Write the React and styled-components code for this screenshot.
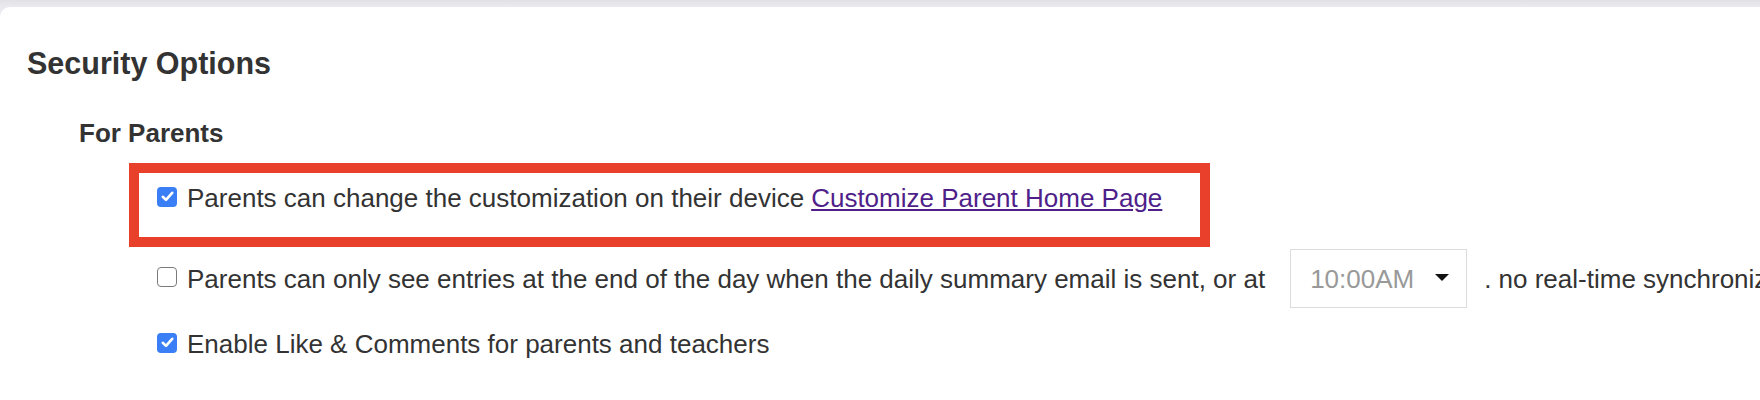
import React from 'react';
import styled, { createGlobalStyle } from 'styled-components';

const GlobalStyle = createGlobalStyle`
    html, body {
        margin: 0;
        padding: 0;
        background: #e6e6ea;
        font-family: "Liberation Sans", Arial, Helvetica, sans-serif;
        color: #333;
        overflow: hidden;
    }
`

const Page = styled.div`
    padding-top: 7px;
    background: linear-gradient(#e1e1e6, #ebebef 7px);
`

const Card = styled.section`
    background: #fff;
    border-top-left-radius: 10px;
    height: 393px;
    padding: 39px 0 0 27px;
    box-sizing: border-box;
    overflow: hidden;
`

const Title = styled.h2`
    margin: 0;
    font-size: 30.5px;
    line-height: 34px;
    font-weight: bold;
    color: #333;
`

const Section = styled.div`
    margin: 38px 0 0 52px;
`

const SubTitle = styled.h3`
    margin: 0;
    font-size: 26px;
    line-height: 30px;
    font-weight: bold;
    color: #333;
`

const Options = styled.div`
    margin: 15px 0 0 78px;
`

/* red annotation frame around the first option */
const Highlight = styled.div`
    width: fit-content;
    margin-left: -28px;
    padding: 10px 38px 24px 18px;
    border: 10px solid #e8402a;
`

const Row = styled.label`
    display: flex;
    align-items: center;
    white-space: nowrap;
    font-size: 26px;
    line-height: 30px;
    color: #333;
    margin-top: ${p => p.$top || 0}px;
`

const Box = styled.span`
    flex: none;
    width: 20px;
    height: 20px;
    margin: 0 10px 3px 0;
    box-sizing: border-box;
    border-radius: 4px;
    display: flex;
    align-items: center;
    justify-content: center;
    background: ${p => (p.$checked ? '#3a7ff6' : '#fff')};
    border: ${p => (p.$checked ? 'none' : '1.5px solid #7a7a7a')};
`

const Link = styled.a`
    color: #4f1f8a;
    text-decoration: underline;
    text-underline-offset: 2px;
    margin-left: 7px;
    cursor: pointer;
`

const Select = styled.div`
    flex: none;
    display: flex;
    align-items: center;
    justify-content: space-between;
    width: 177px;
    height: 59px;
    box-sizing: border-box;
    margin: 0 17px 0 25px;
    padding: 0 17px 0 19px;
    border: 1px solid #dcdcdc;
    color: #999;
    font-size: 26px;
`

const Caret = styled.span`
    width: 0;
    height: 0;
    border-left: 7px solid transparent;
    border-right: 7px solid transparent;
    border-top: 7px solid #111;
    margin-bottom: 2px;
`

function Check({ checked }) {
    return (
        <Box $checked={checked}>
            {checked && (
                <svg width="13" height="11" viewBox="0 0 13 11">
                    <path d="M1.8 5.8 L5 8.9 L11.2 1.8" fill="none" stroke="#fff" strokeWidth="2.6" strokeLinecap="round" strokeLinejoin="round" />
                </svg>
            )}
        </Box>
    )
}

export default function App() {
    return (
        <Page>
            <GlobalStyle />
            <Card>
                <Title>Security Options</Title>
                <Section>
                    <SubTitle>For Parents</SubTitle>
                    <Options>
                        <Highlight>
                            <Row>
                                <Check checked />
                                Parents can change the customization on their device
                                <Link>Customize Parent Home Page</Link>
                            </Row>
                        </Highlight>
                        <Row $top={2}>
                            <Check />
                            Parents can only see entries at the end of the day when the daily summary email is sent, or at
                            <Select>
                                10:00AM
                                <Caret />
                            </Select>
                            . no real-time synchronization
                        </Row>
                        <Row $top={21}>
                            <Check checked />
                            Enable Like &amp; Comments for parents and teachers
                        </Row>
                    </Options>
                </Section>
            </Card>
        </Page>
    )
}
